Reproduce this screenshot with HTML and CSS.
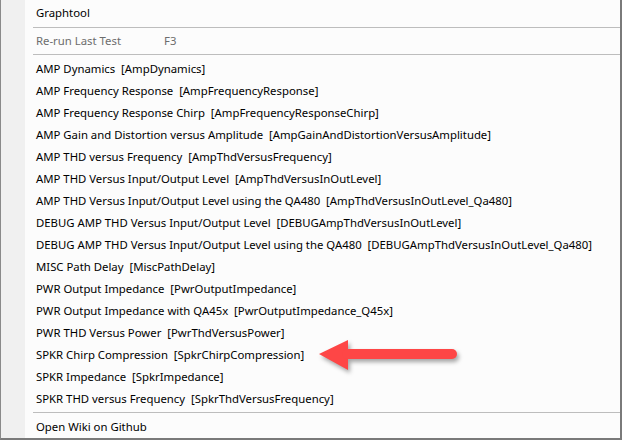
FILE: index.html
```html
<!DOCTYPE html>
<html lang="en">
<head>
<meta charset="UTF-8">
<title>Graphtool menu</title>
<link rel="stylesheet" href="styles.css">
</head>
<body>
<div class="menu">
  <div class="item head">Graphtool</div>
  <div class="sep first"></div>
  <div class="item head disabled"><span class="label">Re-run Last Test</span><span class="key">F3</span></div>
  <div class="sep second"></div>

  <!-- test list -->
  <div class="tests">
    <div class="item">AMP Dynamics  [AmpDynamics]</div>
    <div class="item">AMP Frequency Response  [AmpFrequencyResponse]</div>
    <div class="item">AMP Frequency Response Chirp  [AmpFrequencyResponseChirp]</div>
    <div class="item">AMP Gain and Distortion versus Amplitude  [AmpGainAndDistortionVersusAmplitude]</div>
    <div class="item">AMP THD versus Frequency  [AmpThdVersusFrequency]</div>
    <div class="item">AMP THD Versus Input/Output Level  [AmpThdVersusInOutLevel]</div>
    <div class="item">AMP THD Versus Input/Output Level using the QA480  [AmpThdVersusInOutLevel_Qa480]</div>
    <div class="item">DEBUG AMP THD Versus Input/Output Level  [DEBUGAmpThdVersusInOutLevel]</div>
    <div class="item">DEBUG AMP THD Versus Input/Output Level using the QA480  [DEBUGAmpThdVersusInOutLevel_Qa480]</div>
    <div class="item">MISC Path Delay  [MiscPathDelay]</div>
    <div class="item">PWR Output Impedance  [PwrOutputImpedance]</div>
    <div class="item">PWR Output Impedance with QA45x  [PwrOutputImpedance_Q45x]</div>
    <div class="item">PWR THD Versus Power  [PwrThdVersusPower]</div>
    <div class="item">SPKR Chirp Compression  [SpkrChirpCompression]</div>
    <div class="item">SPKR Impedance  [SpkrImpedance]</div>
    <div class="item">SPKR THD versus Frequency  [SpkrThdVersusFrequency]</div>
  </div>

  <div class="sep third"></div>
  <div class="item foot">Open Wiki on Github</div>

  <!-- red callout arrow -->
  <svg class="arrow" width="150" height="40" viewBox="0 0 150 40">
    <path d="M4 19 L33 5 L33 35 Z" fill="#fe4646"/>
    <line x1="32" y1="19" x2="137" y2="19" stroke="#fe4646" stroke-width="10" stroke-linecap="round"/>
  </svg>
</div>
</body>
</html>
```

FILE: styles.css
```css
/* Windows style context menu */
html, body {
  margin: 0;
  padding: 0;
}

body {
  width: 622px;
  height: 440px;
  background-color: #fcfcfc;
  font-family: "Noto Sans", "Open Sans", sans-serif;
  font-size: 11.35px;
  color: #000;
  overflow: hidden;
}

.menu {
  position: relative;
  box-sizing: border-box;
  width: 622px;
  height: 440px;
  border-left: 1px solid #8a8a8a;
  border-right: 2px solid #7a7a7a;
  border-bottom: 2px solid #7a7a7a;
  background: linear-gradient(to right, #f0f0f0 0, #f0f0f0 24px, #fcfcfc 24px);
}

.item {
  box-sizing: border-box;
  height: 22px;
  line-height: 22px;
  padding-top: 1px;
  padding-left: 35px;
  white-space: pre;
}

.head {
  height: 26px;
  line-height: 26px;
  padding-top: 0;
}

.disabled {
  color: #6d6d6d;
  display: flex;
}

.disabled .label {
  width: 128px;
}

.sep {
  height: 1px;
  margin-left: 32px;
  background-color: #bdbdbd;
}

.sep.first {
  margin-top: 1px;
  margin-bottom: 0;
}

.sep.second {
  margin-top: 0;
  margin-bottom: 2px;
}

.sep.third {
  margin-top: 3px;
}

.foot {
  height: 24px;
  line-height: 26px;
  padding-top: 1px;
}

.arrow {
  position: absolute;
  left: 314px;
  top: 335px;
  filter: drop-shadow(2px 3px 2px rgba(0, 0, 0, 0.35));
}
```
